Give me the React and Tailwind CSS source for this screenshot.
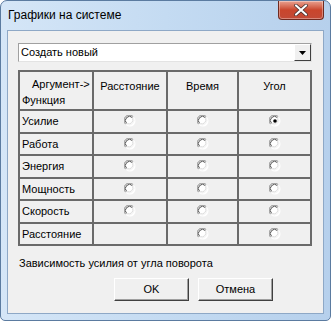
import React from "react";

const font = { fontFamily: '"Liberation Sans", Arial, sans-serif' };

function Radio({ checked }) {
  return (
    <svg width="12" height="12" viewBox="0 0 12 12">
      <circle cx="6" cy="6" r="5.5" fill="#ffffff" />
      <path d="M1.6 9.2 A5 5 0 0 1 9.2 1.6" fill="none" stroke="#8a8a8a" strokeWidth="1" />
      <path d="M2.6 8.4 A4 4 0 0 1 8.4 2.6" fill="none" stroke="#505050" strokeWidth="1" />
      <path d="M9.4 2.6 A5 5 0 0 1 2.6 9.4" fill="none" stroke="#f4f4f4" strokeWidth="1" />
      <path d="M8.6 3.4 A4 4 0 0 1 3.4 8.6" fill="none" stroke="#dcdcdc" strokeWidth="1" />
      {checked && <circle cx="6" cy="6" r="1.8" fill="#000000" />}
    </svg>
  );
}

const rows = [
  ["Усилие", [false, false, true], [true, true, true]],
  ["Работа", [false, false, false], [true, true, true]],
  ["Энергия", [false, false, false], [true, true, true]],
  ["Мощность", [false, false, false], [true, true, true]],
  ["Скорость", [false, false, false], [true, true, true]],
  ["Расстояние", [false, false, false], [false, true, true]],
];

function Cell({ children, className = "" }) {
  return (
    <div className={"border-r-2 border-b-2 border-[#6a6a6a] flex items-center " + className}>
      {children}
    </div>
  );
}

function Button({ children }) {
  return (
    <div className="w-[75px] h-[23px] bg-[#f0f0f0] border border-t-white border-l-white border-r-[#404040] border-b-[#404040] shadow-[inset_-1px_-1px_0_#a0a0a0] flex items-center justify-center text-[11px] text-black">
      {children}
    </div>
  );
}

export default function App() {
  return (
    <div className="w-[331px] h-[321px] bg-white" style={font}>
      <div className="w-[331px] h-[321px] rounded-t-[7px] rounded-b-[5px] border border-[#5b7ba0] bg-gradient-to-r from-[#d5e6f7] via-[#c4dbf2] to-[#b6d0ec] flex flex-col">
        <div className="h-[29px] flex items-start justify-between">
          <div className="pl-[7px] pt-[6px] text-[12px] text-black leading-[16px]">Графики на системе</div>
          <div className="mr-[6px] w-[46px] h-[19px] rounded-b-[4px] border border-t-0 border-[#6f2a20] bg-gradient-to-b from-[#e8a190] via-[#c9452c] to-[#c24a36] flex items-center justify-center shadow-[inset_0_0_0_1px_rgba(255,255,255,0.35)]">
            <svg width="14" height="12" viewBox="0 0 14 12">
              <path d="M2 1.5 L12 10.5 M12 1.5 L2 10.5" stroke="#3a2a2a" strokeWidth="3.6" strokeLinecap="round" />
              <path d="M2 1.5 L12 10.5 M12 1.5 L2 10.5" stroke="#ffffff" strokeWidth="2.2" strokeLinecap="round" />
            </svg>
          </div>
        </div>
        <div className="mx-[6px] h-[284px] border border-[#8ea8c6] bg-[#f0f0f0] flex flex-col pl-[10px] pr-[9px] pt-[12px]">
          <div className="h-[19px] w-[294px] bg-white border border-t-[#a0a0a0] border-l-[#a0a0a0] border-r-[#e3e3e3] border-b-[#e3e3e3] flex items-center">
            <div className="flex-1 pl-[2px] text-[11px] text-black">Создать новый</div>
            <div className="w-[17px] h-[17px] bg-[#f0f0f0] border border-t-white border-l-white border-r-[#404040] border-b-[#404040] flex items-center justify-center">
              <svg width="7" height="4" viewBox="0 0 7 4"><path d="M0 0 H7 L3.5 4 Z" fill="#000" /></svg>
            </div>
          </div>
          <div className="mt-[8px] w-[294px] border-l-2 border-t-2 border-[#6a6a6a] grid grid-cols-[74px_74px_71px_73px] text-[11px] text-black">
            <Cell className="h-[39px] flex-col !items-start">
              <div className="pl-[12px] pt-[5px] leading-[14px]">Аргумент-&gt;</div>
              <div className="pl-[2px] pt-[2px] leading-[14px]">Функция</div>
            </Cell>
            <Cell className="h-[39px] justify-center !items-start pt-[6px]">Расстояние</Cell>
            <Cell className="h-[39px] justify-center !items-start pt-[6px]">Время</Cell>
            <Cell className="h-[39px] justify-center !items-start pt-[6px]">Угол</Cell>
            {rows.map(([label, checks, show]) => (
              <React.Fragment key={label}>
                <Cell className="h-[22.5px] pl-[2px]">{label}</Cell>
                {checks.map((c, i) => (
                  <Cell key={i} className="h-[22.5px] justify-center">
                    {show[i] && <Radio checked={c} />}
                  </Cell>
                ))}
              </React.Fragment>
            ))}
          </div>
          <div className="mt-[10px] pl-[1px] text-[11px] text-black leading-[14px]">Зависимость усилия от угла поворота</div>
          <div className="mt-[8px] flex gap-[9px] pl-[96px]">
            <Button>OK</Button>
            <Button>Отмена</Button>
          </div>
        </div>
      </div>
    </div>
  );
}
